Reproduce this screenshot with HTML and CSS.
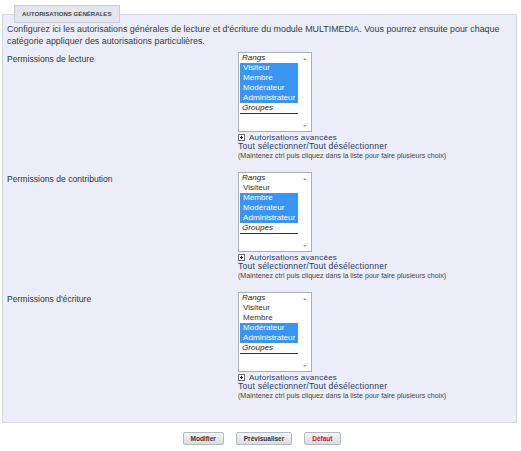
FILE: index.html
```html
<!DOCTYPE html>
<html lang="fr">
<head>
<meta charset="utf-8">
<link rel="stylesheet" href="styles.css">
</head>
<body>
<form class="form">
  <fieldset class="box">
    <legend class="tab">AUTORISATIONS GÉNÉRALES</legend>
    <p class="desc">Configurez ici les autorisations générales de lecture et d'écriture du module MULTIMEDIA. Vous pourrez ensuite pour chaque catégorie appliquer des autorisations particulières.</p>

    <div class="row">
      <div class="label">Permissions de lecture</div>
      <div class="field">
        <div class="listbox">
          <div class="list">
            <div class="grp">Rangs</div>
            <div class="opt sel">Visiteur</div>
            <div class="opt sel">Membre</div>
            <div class="opt sel">Modérateur</div>
            <div class="opt sel">Administrateur</div>
            <div class="grp grp-line">Groupes</div>
          </div>
          <div class="scroll"><span class="arr up"></span><span class="arr down"></span></div>
        </div>
        <div class="adv"><span class="plus"></span>Autorisations avancées</div>
        <div class="toggle">Tout sélectionner/Tout désélectionner</div>
        <div class="hint">(Maintenez ctrl puis cliquez dans la liste pour faire plusieurs choix)</div>
      </div>
    </div>

    <div class="row">
      <div class="label">Permissions de contribution</div>
      <div class="field">
        <div class="listbox">
          <div class="list">
            <div class="grp">Rangs</div>
            <div class="opt">Visiteur</div>
            <div class="opt sel">Membre</div>
            <div class="opt sel">Modérateur</div>
            <div class="opt sel">Administrateur</div>
            <div class="grp grp-line">Groupes</div>
          </div>
          <div class="scroll"><span class="arr up"></span><span class="arr down"></span></div>
        </div>
        <div class="adv"><span class="plus"></span>Autorisations avancées</div>
        <div class="toggle">Tout sélectionner/Tout désélectionner</div>
        <div class="hint">(Maintenez ctrl puis cliquez dans la liste pour faire plusieurs choix)</div>
      </div>
    </div>

    <div class="row">
      <div class="label">Permissions d'écriture</div>
      <div class="field">
        <div class="listbox">
          <div class="list">
            <div class="grp">Rangs</div>
            <div class="opt">Visiteur</div>
            <div class="opt">Membre</div>
            <div class="opt sel">Modérateur</div>
            <div class="opt sel">Administrateur</div>
            <div class="grp grp-line">Groupes</div>
          </div>
          <div class="scroll"><span class="arr up"></span><span class="arr down"></span></div>
        </div>
        <div class="adv"><span class="plus"></span>Autorisations avancées</div>
        <div class="toggle">Tout sélectionner/Tout désélectionner</div>
        <div class="hint">(Maintenez ctrl puis cliquez dans la liste pour faire plusieurs choix)</div>
      </div>
    </div>
  </fieldset>

  <div class="buttons">
    <button type="button" class="btn">Modifier</button>
    <button type="button" class="btn">Prévisualiser</button>
    <button type="button" class="btn btn-reset">Défaut</button>
  </div>
</form>
</body>
</html>
```

FILE: styles.css
```css
html, body {
  margin: 0;
  padding: 0;
  background: #ffffff;
}

body {
  font-family: "Liberation Sans", Arial, sans-serif;
  font-size: 8.6px;
  color: #333333;
}

.form {
  padding: 5px 4px 0 2px;
}

.box {
  margin: 0;
  width: 515px;
  box-sizing: border-box;
  border: 1px solid #d4d8e2;
  background: #ebeef9;
  padding: 0 0 21px 4px;
  min-width: 0;
}

.tab {
  margin-left: 7px;
  padding: 0 7px;
  height: 16px;
  line-height: 16px;
  border: 1px solid #c9cdd6;
  background: #e3e6ec;
  font-size: 6.1px;
  font-weight: bold;
  color: #444;
}

.desc {
  margin: 0 8px 5px 0;
  line-height: 12px;
  font-size: 8.9px;
  color: #3a3a3a;
}

.row {
  display: grid;
  grid-template-columns: 231px auto;
  margin-bottom: 11px;
}

.row:last-child {
  margin-bottom: 0;
}

.label {
  padding-top: 2px;
  font-size: 8.6px;
  color: #333;
}

.listbox {
  width: 74px;
  height: 80px;
  box-sizing: border-box;
  border: 1px solid #a9afba;
  background: #ffffff;
  display: flex;
}

.list {
  flex: 1;
  padding: 0 0 0 1px;
}

.grp {
  font-style: italic;
  line-height: 10px;
  height: 10px;
  padding-left: 2px;
  color: #222;
  font-size: 8.1px;
}

.grp-line {
  border-bottom: 1px solid #333;
}

.opt {
  line-height: 10px;
  height: 10px;
  padding-left: 3px;
  font-size: 8.1px;
  color: #333;
}

.opt.sel {
  background: #3a94f3;
  color: #ffffff;
}

.scroll {
  width: 13px;
  display: flex;
  flex-direction: column;
  justify-content: space-between;
  align-items: center;
  padding: 5px 0 4px;
  background: #ffffff;
}

.arr {
  width: 0;
  height: 0;
  border-left: 2px solid transparent;
  border-right: 2px solid transparent;
}

.arr.up {
  border-bottom: 2px solid #9aa0aa;
}

.arr.down {
  border-top: 2px solid #9aa0aa;
}

.adv {
  display: flex;
  align-items: center;
  height: 10px;
  font-size: 8.1px;
  color: #2c3a5e;
  letter-spacing: 0.2px;
}

.plus {
  position: relative;
  width: 5px;
  height: 5px;
  border: 1px solid #6b6f78;
  background: #fff;
  margin-right: 4px;
  flex: none;
}

.plus::before,
.plus::after {
  content: "";
  position: absolute;
  background: #222;
}

.plus::before {
  left: 1px;
  top: 2px;
  width: 3px;
  height: 1px;
}

.plus::after {
  left: 2px;
  top: 1px;
  width: 1px;
  height: 3px;
}

.toggle {
  height: 9px;
  line-height: 9px;
  font-size: 8.6px;
  color: #2c3a5e;
  letter-spacing: 0.2px;
}

.hint {
  height: 10px;
  line-height: 10px;
  font-size: 7.1px;
  color: #444;
}

.buttons {
  display: flex;
  justify-content: center;
  gap: 12px;
  padding-top: 9px;
  padding-left: 4px;
}

.btn {
  height: 13px;
  padding: 0 7px;
  border: 1px solid #b5b9c2;
  border-radius: 2px;
  background: linear-gradient(#f3f4f6, #d9dce2);
  font-family: "Liberation Sans", Arial, sans-serif;
  font-size: 6.5px;
  font-weight: bold;
  color: #333;
  line-height: 11px;
}

.btn-reset {
  color: #c8102e;
}
```
